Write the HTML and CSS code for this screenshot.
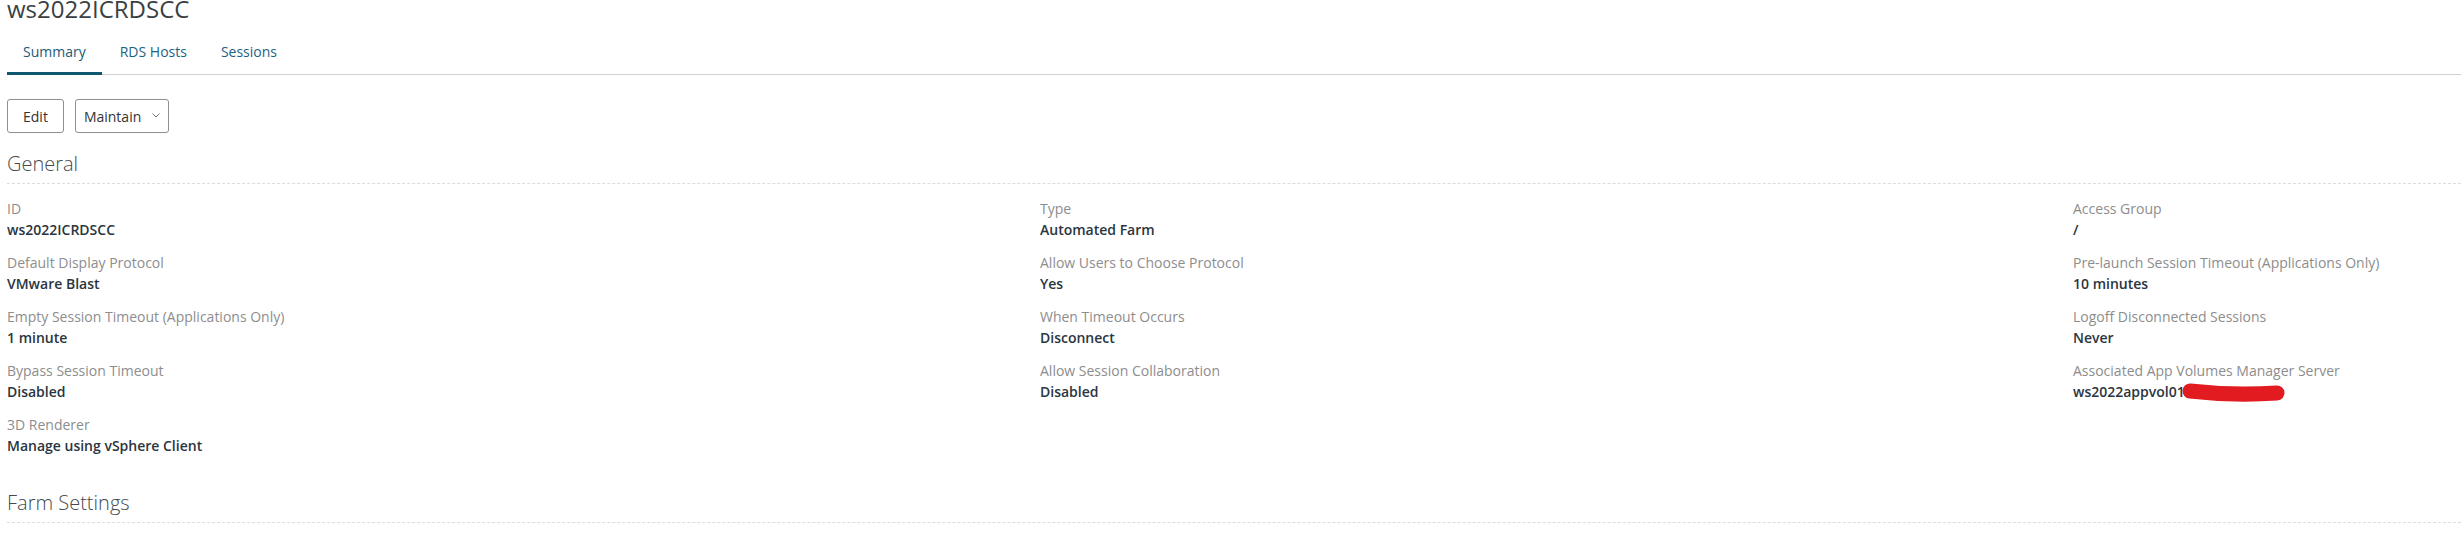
FILE: index.html
```html
<!DOCTYPE html>
<html lang="en">
<head>
    <meta charset="UTF-8">
    <meta name="viewport" content="width=device-width, initial-scale=1.0">
    <title>ws2022ICRDSCC</title>
    <link rel="stylesheet" href="styles.css">
</head>
<body>
    <h1 class="page-title">ws2022ICRDSCC</h1>

    <nav class="tabs">
        <a class="tab active" href="#">Summary</a>
        <a class="tab" href="#">RDS Hosts</a>
        <a class="tab" href="#">Sessions</a>
    </nav>

    <div class="toolbar">
        <button class="btn" type="button">Edit</button>
        <button class="btn select" type="button">
            <span>Maintain</span>
            <svg class="chevron" width="8" height="5" viewBox="0 0 8 5"><polyline points="0.5,0.5 4,4 7.5,0.5" fill="none" stroke="#777" stroke-width="1"/></svg>
        </button>
    </div>

    <section class="section">
        <h2 class="section-title">General</h2>
        <div class="props">
            <div class="prop"><div class="label">ID</div><div class="value">ws2022ICRDSCC</div></div>
            <div class="prop"><div class="label">Type</div><div class="value">Automated Farm</div></div>
            <div class="prop"><div class="label">Access Group</div><div class="value">/</div></div>

            <div class="prop"><div class="label">Default Display Protocol</div><div class="value">VMware Blast</div></div>
            <div class="prop"><div class="label">Allow Users to Choose Protocol</div><div class="value">Yes</div></div>
            <div class="prop"><div class="label">Pre-launch Session Timeout (Applications Only)</div><div class="value">10 minutes</div></div>

            <div class="prop"><div class="label">Empty Session Timeout (Applications Only)</div><div class="value">1 minute</div></div>
            <div class="prop"><div class="label">When Timeout Occurs</div><div class="value">Disconnect</div></div>
            <div class="prop"><div class="label">Logoff Disconnected Sessions</div><div class="value">Never</div></div>

            <div class="prop"><div class="label">Bypass Session Timeout</div><div class="value">Disabled</div></div>
            <div class="prop"><div class="label">Allow Session Collaboration</div><div class="value">Disabled</div></div>
            <div class="prop">
                <div class="label">Associated App Volumes Manager Server</div>
                <div class="value redacted">ws2022appvol01.
                    <svg class="scribble" width="104" height="26" viewBox="0 0 104 26"><path d="M9,10 Q52,15 96,12" fill="none" stroke="#e11b1f" stroke-width="15" stroke-linecap="round"/></svg>
                </div>
            </div>

            <div class="prop"><div class="label">3D Renderer</div><div class="value">Manage using vSphere Client</div></div>
        </div>
    </section>

    <section class="section">
        <h2 class="section-title farm">Farm Settings</h2>
    </section>
</body>
</html>
```

FILE: styles.css
```css
body {
    font-family: 'Open Sans', 'Noto Sans', sans-serif;
    background-color: #ffffff;
    color: #1b2631;
    margin: 0;
    padding: 0 0 0 7px;
    overflow: hidden;
}
.page-title {
    font-size: 24px;
    font-weight: 400;
    line-height: 32px;
    color: #3a3f44;
    margin: -7px 0 0 0;
}
.tabs {
    display: flex;
    gap: 2px;
    margin-top: 17px;
    border-bottom: 1px solid #d0d0d0;
}
.tab {
    font-size: 14px;
    line-height: 20px;
    padding: 0 16px 13px;
    margin-bottom: -1px;
    color: #1e6282;
    text-decoration: none;
}
.tab.active {
    box-shadow: inset 0 -3px 0 #0f5770;
    color: #1a5b78;
}
.toolbar {
    display: flex;
    gap: 11px;
    margin-top: 24px;
}
.btn {
    font-family: inherit;
    font-size: 14px;
    height: 34px;
    padding: 0 15px;
    color: #333;
    background: #fff;
    border: 1px solid #8f8f8f;
    border-radius: 3px;
    cursor: pointer;
}
.select {
    display: flex;
    align-items: center;
    width: 94px;
    padding: 0 8px 0 8px;
    justify-content: space-between;
}
.chevron {
    margin-top: -2px;
}
.section-title {
    font-size: 20px;
    font-weight: 300;
    line-height: 28px;
    color: #454a4f;
    margin: 17px 0 0 0;
    padding-bottom: 5px;
    border-bottom: 1px dashed #dcdcdc;
}
.section-title.farm {
    margin-top: 33px;
}
.props {
    display: grid;
    grid-template-columns: 1033px 1033px 1fr;
    row-gap: 12px;
    margin-top: 14px;
}
.label, .value {
    font-size: 14px;
    line-height: 21px;
    white-space: nowrap;
}
.label {
    color: #8d8d8d;
}
.value {
    font-weight: 600;
    color: #2a3540;
}
.redacted {
    position: relative;
}
.scribble {
    position: absolute;
    left: 108px;
    top: 0;
}
```
